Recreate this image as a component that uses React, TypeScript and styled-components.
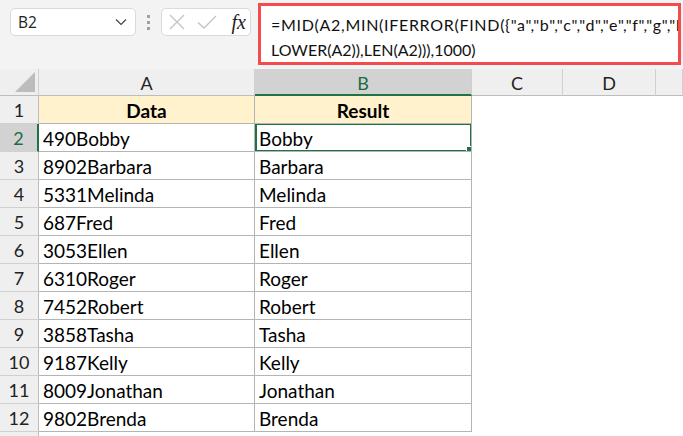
import React from 'react';
import styled, { createGlobalStyle, css } from 'styled-components';

const GlobalStyle = createGlobalStyle`
  html, body {
    margin: 0;
    padding: 0;
    background: #ffffff;
    overflow: hidden;
  }
  * {
    box-sizing: border-box;
  }
`;

const GREEN = '#217346';

const FORMULA_LINE_1 = '=MID(A2,MIN(IFERROR(FIND({"a","b","c","d","e","f","g","h","i","j","k"},';
const FORMULA_LINE_2 = 'LOWER(A2)),LEN(A2))),1000)';

const rows: [string, string][] = [
  ['490Bobby', 'Bobby'],
  ['8902Barbara', 'Barbara'],
  ['5331Melinda', 'Melinda'],
  ['687Fred', 'Fred'],
  ['3053Ellen', 'Ellen'],
  ['6310Roger', 'Roger'],
  ['7452Robert', 'Robert'],
  ['3858Tasha', 'Tasha'],
  ['9187Kelly', 'Kelly'],
  ['8009Jonathan', 'Jonathan'],
  ['9802Brenda', 'Brenda'],
];

const columns = ['A', 'B', 'C', 'D', ''];

const Page = styled.div`
  width: 683px;
  height: 436px;
  overflow: hidden;
  font-family: Lato, 'Liberation Sans', sans-serif;
  background: #ffffff;
`;

/* ---------- formula bar ---------- */

const Toolbar = styled.div`
  height: 69px;
  background: #f3f3f3;
  display: flex;
  align-items: flex-start;
  padding: 0 2px 0 10px;
`;

const NameBox = styled.div`
  margin-top: 8px;
  width: 126px;
  height: 28px;
  background: #ffffff;
  border: 1px solid #dadada;
  border-radius: 5px;
  display: flex;
  align-items: center;
  justify-content: space-between;
  padding: 0 8px 0 7px;
  font-family: 'Open Sans', 'Noto Sans', sans-serif;
  font-size: 15.5px;
  color: #222;
`;

const Dots = styled.div`
  margin: 15px 0 0 11px;
  width: 3px;
  display: flex;
  flex-direction: column;
  gap: 3px;

  span {
    width: 3px;
    height: 3px;
    background: #a0a0a0;
  }
`;

const FxBox = styled.div`
  margin: 8px 0 0 11px;
  width: 90px;
  height: 28px;
  background: #ffffff;
  border: 1px solid #dadada;
  border-radius: 5px;
  display: flex;
  align-items: center;
  padding: 0 4px 0 6px;
  gap: 11px;
`;

const FxLabel = styled.span`
  margin-left: auto;
  font-family: 'Liberation Serif', serif;
  font-style: italic;
  font-size: 20px;
  color: #222;
  line-height: 1;
`;

const FormulaInput = styled.div`
  margin: 3px 0 0 7px;
  flex: 1;
  height: 62px;
  background: #ffffff;
  border: 3px solid #f44b4f;
  padding: 6px 0 0 10px;
  overflow: hidden;
  font-size: 16px;
  line-height: 25px;
  color: #111;
`;

const FormulaLine = styled.div<{ $tracking?: number }>`
  white-space: nowrap;
  letter-spacing: ${(p) => p.$tracking ?? 0}px;
`;

/* ---------- grid ---------- */

const Sheet = styled.div`
  display: grid;
  grid-template-columns: 39px 216px 217px 91px 93px 1fr;
  grid-template-rows: 27px;
  grid-auto-rows: 28px;
`;

const Corner = styled.div`
  background: #efefef;
  border-bottom: 1px solid #bdbdbd;
  border-right: 1px solid #d0d0d0;
  position: relative;

  &::after {
    content: '';
    position: absolute;
    right: 3px;
    bottom: 3px;
    width: 20px;
    height: 20px;
    background: #bcbcbc;
    clip-path: polygon(100% 0, 100% 100%, 0 100%);
  }
`;

const ColHeader = styled.div<{ $selected?: boolean }>`
  background: ${(p) => (p.$selected ? '#d2d2d2' : '#efefef')};
  border-bottom: 1px solid #bdbdbd;
  border-right: 1px solid #d0d0d0;
  display: flex;
  align-items: center;
  justify-content: center;
  font-size: 18px;
  color: ${(p) => (p.$selected ? '#1e6b41' : '#222')};
  padding-top: 2px;
  ${(p) =>
    p.$selected &&
    css`
      border-bottom: 2px solid ${GREEN};
    `}
`;

const RowHeader = styled.div<{ $selected?: boolean }>`
  background: ${(p) => (p.$selected ? '#d2d2d2' : '#efefef')};
  border-bottom: 1px solid #d0d0d0;
  border-right: 1px solid #bdbdbd;
  display: flex;
  align-items: center;
  justify-content: center;
  font-size: 18px;
  color: ${(p) => (p.$selected ? '#1e6b41' : '#222')};
  padding-top: 1px;
  ${(p) =>
    p.$selected &&
    css`
      border-right: 2px solid ${GREEN};
    `}
`;

const Cell = styled.div<{ $table?: boolean; $head?: boolean }>`
  display: flex;
  align-items: flex-end;
  padding: 0 4px 1px 4px;
  font-size: 19px;
  line-height: 23px;
  color: #000;
  white-space: nowrap;
  overflow: hidden;
  ${(p) =>
    p.$table &&
    css`
      border-right: 1px solid #b4b4b4;
      border-bottom: 1px solid #b4b4b4;
    `}
  ${(p) =>
    p.$head &&
    css`
      background: #fff2cc;
      justify-content: center;
      font-weight: 700;
    `}
`;

const ActiveCell = styled(Cell)`
  position: relative;

  &::before {
    content: '';
    position: absolute;
    left: 0;
    top: -1px;
    right: -1px;
    bottom: -1px;
    border: 2px solid ${GREEN};
    pointer-events: none;
  }

  &::after {
    content: '';
    position: absolute;
    right: -3px;
    bottom: -3px;
    width: 6px;
    height: 6px;
    background: ${GREEN};
    border: 1px solid #ffffff;
  }
`;

const Blank = styled.div``;

const ChevronDown = () => (
  <svg width="12" height="8" viewBox="0 0 12 8">
    <path d="M1 1.5 L6 6.5 L11 1.5" fill="none" stroke="#444" strokeWidth="1.2" />
  </svg>
);

const CrossIcon = () => (
  <svg width="18" height="18" viewBox="0 0 18 18">
    <path d="M2 2 L16 16 M16 2 L2 16" stroke="#c4c4c4" strokeWidth="1.4" />
  </svg>
);

const CheckIcon = () => (
  <svg width="20" height="16" viewBox="0 0 20 16">
    <path d="M1 8.5 L7 14 L19 2" fill="none" stroke="#c4c4c4" strokeWidth="1.4" />
  </svg>
);

const App = () => {
  return (
    <Page>
      <GlobalStyle />
      <Toolbar>
        <NameBox>
          <span>B2</span>
          <ChevronDown />
        </NameBox>
        <Dots>
          <span />
          <span />
          <span />
        </Dots>
        <FxBox>
          <CrossIcon />
          <CheckIcon />
          <FxLabel>fx</FxLabel>
        </FxBox>
        <FormulaInput>
          <FormulaLine $tracking={0.7}>{FORMULA_LINE_1}</FormulaLine>
          <FormulaLine>{FORMULA_LINE_2}</FormulaLine>
        </FormulaInput>
      </Toolbar>

      <Sheet>
        <Corner />
        {columns.map((c) => (
          <ColHeader key={c || 'E'} $selected={c === 'B'}>
            {c}
          </ColHeader>
        ))}

        <RowHeader>1</RowHeader>
        <Cell $table $head>
          Data
        </Cell>
        <Cell $table $head>
          Result
        </Cell>
        <Blank />
        <Blank />
        <Blank />

        {rows.map(([data, result], i) => {
          const rowNum = i + 2;
          const active = rowNum === 2;
          return (
            <React.Fragment key={rowNum}>
              <RowHeader $selected={active}>{rowNum}</RowHeader>
              <Cell $table>{data}</Cell>
              {active ? <ActiveCell $table>{result}</ActiveCell> : <Cell $table>{result}</Cell>}
              <Blank />
              <Blank />
              <Blank />
            </React.Fragment>
          );
        })}
        <RowHeader />
      </Sheet>
    </Page>
  );
};

export default App;
